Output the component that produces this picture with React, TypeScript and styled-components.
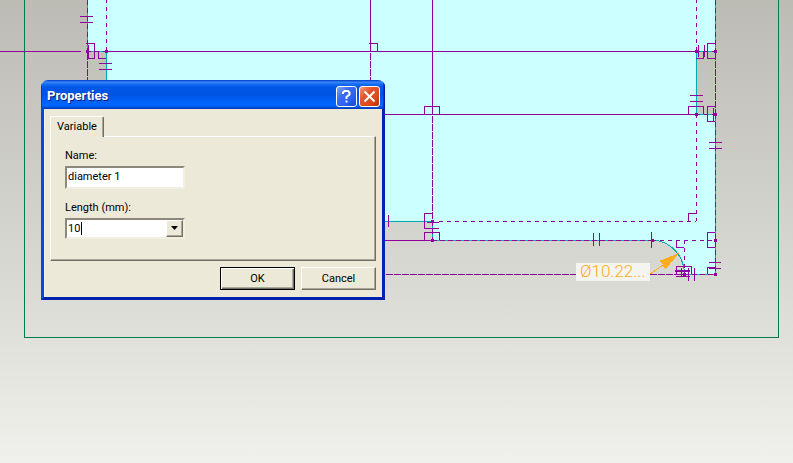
import React, { useState } from "react";
import styled, { createGlobalStyle, css } from "styled-components";

const GlobalStyle = createGlobalStyle`
  * { box-sizing: border-box; }
  html, body { margin: 0; overflow: hidden; }
  body { font-family: Roboto, "Liberation Sans", sans-serif; font-size: 11px; color: #000; }
  button, input { font: inherit; color: inherit; }
`;

const violet = "#90009c";
const teal = "#00acac";
const amber = "#ffac20";

const Workspace = styled.main`
  position: relative;
  min-height: 100vh;
  overflow: hidden;
  background: linear-gradient(#bcbbb4, #d9d9d4 60%, #f0f1ec);
`;

const Sketch = styled.svg`
  position: absolute;
  inset: 0;
  width: 100%;
  height: 100%;
  fill: none;
  shape-rendering: crispEdges;
`;

const Dimension = styled.text`
  fill: ${amber};
  font: 300 17px Roboto, sans-serif;
`;

const Dialog = styled.form`
  position: absolute;
  left: 41px;
  top: 80px;
  width: 344px;
  display: flex;
  flex-direction: column;
  border-radius: 7px 7px 0 0;
  overflow: hidden;
  background: #ece9d8;
`;

const TitleBar = styled.header`
  display: flex;
  align-items: center;
  gap: 2px;
  height: 29px;
  padding: 3px 5px 0 6px;
  background: linear-gradient(#0a4bd0 0, #0a4bd0 3%, #3c8cfc 7%, #1c70f4 13%, #0058e6 24%, #0054e4 50%, #0062fa 75%, #0066ff 88%, #0048d0 96%, #0038b8);
  box-shadow: inset 1px 0 #0838c8, inset -1px 0 #001c98, inset -2px 0 #0038cc;
`;

const Title = styled.h1`
  flex: 1;
  margin: 0;
  font: bold 13px/18px Roboto, sans-serif;
  color: #fff;
  text-shadow: 1px 1px #0a1e80;
`;

const CaptionButton = styled.button<{ $danger?: boolean }>`
  width: 21px;
  height: 21px;
  padding: 0;
  border: 1px solid #fff;
  border-radius: 3px;
  background: ${(p) =>
    p.$danger
      ? "linear-gradient(135deg, #f09878, #e4542c 35%, #dc4818 70%, #b83008)"
      : "linear-gradient(135deg, #80a8f8, #3c6cf0 35%, #2860f0 70%, #1848c8)"};
  svg { display: block; width: 19px; height: 19px; fill: none; stroke: #fff; stroke-width: 2; }
`;

const Body = styled.div`
  display: flex;
  flex-direction: column;
  padding: 7px 6px 7px;
  border: solid #0848e0;
  border-width: 0 3px 3px;
  border-right-color: #0024b4;
  border-bottom-color: #0020b0;
  box-shadow: inset 1px 0 #f4f2e8;
`;

const TabList = styled.div`
  display: flex;
`;

const Tab = styled.button`
  width: 54px;
  height: 21px;
  padding: 0 0 2px;
  margin-bottom: -1px;
  z-index: 1;
  border: solid;
  border-width: 1px 1px 0 1px;
  border-color: #fff #716f64 #fff #fff;
  border-radius: 2px 2px 0 0;
  background: #ece9d8;
  box-shadow: inset -1px 0 #aca899;
`;

const Panel = styled.section`
  display: flex;
  flex-direction: column;
  align-items: flex-start;
  height: 125px;
  padding: 12px 14px;
  border: 1px solid;
  border-color: #fff #716f64 #716f64 #fff;
  box-shadow: inset -1px -1px #aca899;
`;

const Label = styled.label`
  line-height: 14px;
  margin-bottom: 3px;
`;

const sunken = css`
  border: 2px solid;
  border-color: #8c897c #f1efe2 #f1efe2 #8c897c;
  background: #fff;
`;

const TextBox = styled.input`
  ${sunken}
  width: 120px;
  height: 23px;
  padding: 0 1px 3px;
  margin-bottom: 12px;
  outline: 0;
`;

const Combo = styled.div`
  ${sunken}
  display: flex;
  width: 120px;
  height: 21px;
`;

const Entry = styled.div`
  display: flex;
  flex: 1;
  align-items: center;
  min-width: 0;
`;

const ComboInput = styled.input`
  width: 14px;
  padding: 0 0 1px 1px;
  border: 0;
  outline: 0;
  background: transparent;
  caret-color: transparent;
`;

const Caret = styled.span`
  width: 1px;
  height: 13px;
  background: #000;
`;

const Push = styled.button<{ $primary?: boolean }>`
  width: 75px;
  height: 23px;
  padding: 0 0 1px;
  background: #ece9d8;
  border: 1px solid;
  border-color: ${(p) => (p.$primary ? "#000" : "#fff #716f64 #716f64 #fff")};
  box-shadow: ${(p) =>
    p.$primary ? "inset 1px 1px #fff, inset -1px -1px #716f64, inset -2px -2px #aca899" : "inset -1px -1px #aca899"};
`;

const DropButton = styled(Push)`
  width: 17px;
  height: 17px;
  svg { display: block; margin: 0 auto; fill: #000; }
`;

const Actions = styled.footer`
  display: flex;
  justify-content: flex-end;
  gap: 6px;
  padding-top: 6px;
`;

const nodes = [
  [87, 51], [106, 51], [696, 51], [715, 51], [696, 114], [715, 114],
  [432, 221], [432, 240], [652, 240], [715, 240], [684, 274], [715, 274],
];

function Drawing() {
  return (
    <Sketch aria-label="Part sketch">
      <path
        fill="#ccffff"
        d="M87 0H716V51H697V114H716V275H685Q684 241 653 241H432V222H106V51H87Z"
      />
      <g transform="translate(.4 .4)">
        <path stroke="#007c50" d="M24 -1V337H778V-1" />
        <path
          stroke={teal}
          d="M87 -1V51H106V221H432V240H652A32 34 0 0 1 684 274H715V114H696V51H715V-1"
        />
        <g stroke={violet}>
          <path d="M0 51H81M106 51H696M370 0V51M432 0V114M106 114H696M106 240H432" />
          <path strokeDasharray="5 3" d="M87 0V51M715 0V51M715 114V274M432 240H652M684 274H715M432 221V240" />
          <path strokeDasharray="4 4" d="M106 -1V51M696 -1V51M696 114V221M439 221H696M652 240H715M684 240V274M87 51H106M696 51H715M696 114H715" />
          <path strokeDasharray="7 1" d="M87 53V114M370 53V221M432 116V221M715 53V114M386 274H684" />
          <path d="M80 16H93M80 22H93M99 63H112M99 69H112M690 95H703M690 101H703M709 142H722M709 148H722M709 262H721M709 268H721" />
          <path d="M388 215V227M593 233V246M599 233V246M651 232V248M688 268V281M694 268V281M427 222H439M424 228H439" />
          <path d="M86 43H94V58H87M88 45V59M98 51V58H106M369 43H377V51M424 114V106H439V114" />
          <path d="M432 213H424V228M424 240V232H439V240M715 43H707V58H715M698 45V57M704 45V57M703 51V58H696" />
          <path d="M688 114V106H703V114M715 106H707V121H715M713 108V121M688 221V213H696M715 232H707V247H715" />
          <path d="M676 240V247H684M707 274V267H715M676 274V266H691V274M675 270H690M675 271H690M676 276H690M681 268V276" />
        </g>
      </g>
      {nodes.map(([x, y]) => (
        <rect key={`${x}-${y}`} x={x - 1} y={y - 1} width="3" height="3" fill={violet} />
      ))}
      <rect x="576" y="263" width="74" height="18" fill="#f4f4f0" />
      <path stroke={amber} d="M650 274L666 263" />
      <path fill={amber} d="M679 253L659 261L663 264L662 266L666 269Z" />
      <Dimension x="580" y="277">Ø10.22...</Dimension>
    </Sketch>
  );
}

export default function App() {
  const [name, setName] = useState("diameter 1");
  const [length, setLength] = useState("10");
  return (
    <>
      <GlobalStyle />
      <Workspace>
        <Drawing />
        <Dialog onSubmit={(e) => e.preventDefault()} aria-labelledby="dialog-title">
          <TitleBar>
            <Title id="dialog-title">Properties</Title>
            <CaptionButton type="button" aria-label="Help">
              <svg viewBox="0 0 19 19">
                <path d="M6 7V5.500L7.500 4H11L12.500 5.500V7.500L9.500 10V12M9.500 13.500V15.500" />
              </svg>
            </CaptionButton>
            <CaptionButton type="button" aria-label="Close" $danger>
              <svg viewBox="0 0 19 19">
                <path d="M4.500 4.500L14.500 14.500M14.500 4.500L4.500 14.500" />
              </svg>
            </CaptionButton>
          </TitleBar>
          <Body>
            <TabList role="tablist">
              <Tab type="button" role="tab" aria-selected="true">Variable</Tab>
            </TabList>
            <Panel role="tabpanel">
              <Label htmlFor="name">Name:</Label>
              <TextBox id="name" value={name} onChange={(e) => setName(e.target.value)} />
              <Label htmlFor="length">Length (mm):</Label>
              <Combo>
                <Entry>
                  <ComboInput id="length" value={length} onChange={(e) => setLength(e.target.value)} />
                  <Caret />
                </Entry>
                <DropButton type="button" aria-label="Show lengths">
                  <svg width="7" height="4" viewBox="0 0 7 4"><path d="M0 0H7L3.500 4Z" /></svg>
                </DropButton>
              </Combo>
            </Panel>
            <Actions>
              <Push $primary type="submit">OK</Push>
              <Push type="button">Cancel</Push>
            </Actions>
          </Body>
        </Dialog>
      </Workspace>
    </>
  );
}
